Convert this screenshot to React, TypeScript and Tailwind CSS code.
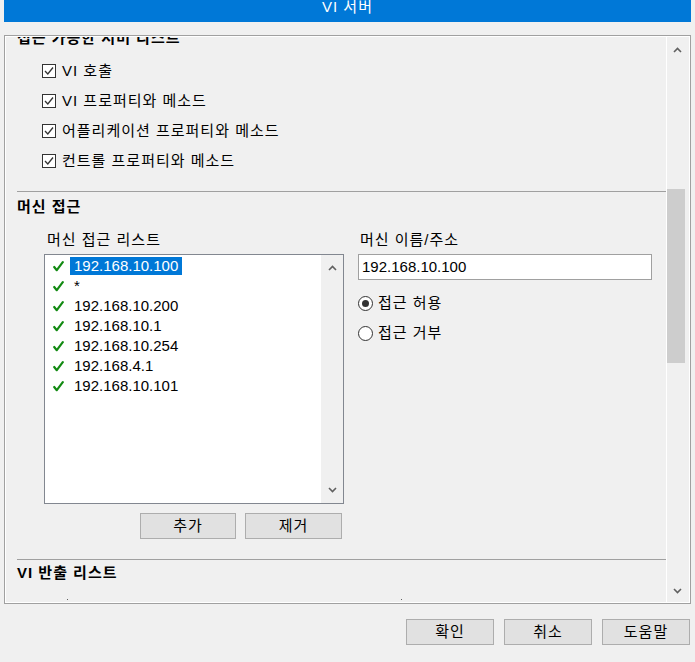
import React from 'react';

const font = "font-['Liberation_Sans','Noto_Sans_CJK_KR',sans-serif]";

function Check() {
  return (
    <svg width="11" height="11" viewBox="0 0 11 11" className="shrink-0">
      <path d="M1.2 6 L3.8 9.2 L9.8 1.2" fill="none" stroke="#128a12" strokeWidth="2.2" strokeLinecap="round" strokeLinejoin="round" />
    </svg>
  );
}

function CheckBox() {
  return (
    <div className="w-[14px] h-[14px] border border-[#333333] bg-white flex items-center justify-center shrink-0">
      <svg width="10" height="10" viewBox="0 0 10 10">
        <path d="M1 5 L3.8 8 L9 1.5" fill="none" stroke="#333333" strokeWidth="1.3" />
      </svg>
    </div>
  );
}

function Radio({ on }: { on?: boolean }) {
  return (
    <div className="w-[15px] h-[15px] rounded-full border border-[#333333] bg-white flex items-center justify-center shrink-0">
      {on && <div className="w-[7px] h-[7px] rounded-full bg-[#333333]" />}
    </div>
  );
}

function Chevron({ down }: { down?: boolean }) {
  return (
    <svg width="9" height="6" viewBox="0 0 9 6">
      <path d={down ? 'M1 1 L4.5 4.5 L8 1' : 'M1 5 L4.5 1.5 L8 5'} fill="none" stroke="#606060" strokeWidth="1.6" />
    </svg>
  );
}

function Btn({ label, w }: { label: string; w: string }) {
  return (
    <div className={`${w} h-[26px] border border-[#adadad] bg-[#e1e1e1] flex items-center justify-center leading-[20px]`}>
      {label}
    </div>
  );
}

export default function App() {
  const items = ['192.168.10.100', '*', '192.168.10.200', '192.168.10.1', '192.168.10.254', '192.168.4.1', '192.168.10.101'];
  const options = ['VI 호출', 'VI 프로퍼티와 메소드', '어플리케이션 프로퍼티와 메소드', '컨트롤 프로퍼티와 메소드'];

  return (
    <div className={`w-[695px] h-[662px] bg-[#f0f0f0] overflow-hidden text-[15px] tracking-[1px] text-black ${font}`}>
      {/* title */}
      <div className="ml-[4px] w-[687px] h-[22px] bg-[#0078d7] overflow-hidden flex justify-center">
        <span className="text-white leading-[20px] -mt-[3px]">VI 서버</span>
      </div>

      {/* scrolling panel */}
      <div className="mt-[13px] ml-[4px] w-[687px] h-[569px] border border-[#a0a0a0] flex">
        <div className="flex-1 flex border border-white">
          <div className="w-[660px] overflow-hidden flex flex-col">
            <div className="h-[20px] leading-[20px] -mt-[9px] pl-[11px] font-bold">접근 가능한 서버 리스트</div>

            <div className="mt-[8px] pl-[36px] flex flex-col">
              {options.map((o) => (
                <div key={o} className="h-[30px] flex items-center gap-[6px] leading-[20px]">
                  <CheckBox />
                  <span>{o}</span>
                </div>
              ))}
            </div>

            <div className="mt-[15px] ml-[11px] h-px bg-[#a0a0a0]" />
            <div className="mt-[5px] h-[20px] leading-[20px] pl-[11px] font-bold">머신 접근</div>

            <div className="mt-[13px] flex pl-[38px]">
              <div className="w-[300px] flex flex-col">
                <div className="h-[20px] leading-[20px] pl-[3px]">머신 접근 리스트</div>
                <div className="mt-[4px] h-[250px] border border-[#828790] bg-white flex">
                  <div className="flex-1 pt-[1px] flex flex-col tracking-normal">
                    {items.map((it, i) => (
                      <div key={i} className="h-[20px] flex items-center pl-[8px]">
                        <Check />
                        <span
                          className={`ml-[6px] px-[4px] h-[18px] leading-[18px] ${i === 0 ? 'bg-[#0078d7] text-white' : ''}`}
                        >
                          {it}
                        </span>
                      </div>
                    ))}
                  </div>
                  <div className="w-[22px] bg-[#f0f0f0] flex flex-col items-center justify-between py-[10px]">
                    <Chevron />
                    <Chevron down />
                  </div>
                </div>
                <div className="mt-[9px] flex gap-[9px] pl-[96px]">
                  <Btn label="추가" w="w-[96px]" />
                  <Btn label="제거" w="w-[97px]" />
                </div>
              </div>

              <div className="ml-[14px] flex flex-col">
                <div className="h-[20px] leading-[20px] pl-[2px]">머신 이름/주소</div>
                <div className="mt-[4px] w-[294px] h-[26px] border border-[#a0a0a0] bg-white flex items-center pl-[3px] leading-[20px] tracking-normal">
                  192.168.10.100
                </div>
                <div className="mt-[8px] flex flex-col">
                  <div className="h-[30px] flex items-center gap-[5px] leading-[20px]">
                    <Radio on />
                    <span>접근 허용</span>
                  </div>
                  <div className="h-[30px] flex items-center gap-[5px] leading-[20px]">
                    <Radio />
                    <span>접근 거부</span>
                  </div>
                </div>
              </div>
            </div>

            <div className="mt-[20px] ml-[11px] h-px bg-[#a0a0a0]" />
            <div className="mt-[3px] h-[20px] leading-[20px] pl-[11px] font-bold">VI 반출 리스트</div>
            <div className="mt-[16px] h-px flex">
              <div className="ml-[61px] w-px h-px bg-[#606060]" />
              <div className="ml-[333px] w-px h-px bg-[#606060]" />
            </div>
          </div>

          {/* outer scrollbar */}
          <div className="w-[22px] border-l border-white flex flex-col">
            <div className="h-[26px] flex items-center justify-center pr-[1px]">
              <Chevron />
            </div>
            <div className="mt-[126px] w-[18px] h-[174px] bg-[#cdcdcd]" />
            <div className="flex-1" />
            <div className="h-[22px] flex items-center justify-center pr-[1px]">
              <Chevron down />
            </div>
          </div>
        </div>
      </div>

      {/* dialog buttons */}
      <div className="mt-[15px] flex justify-end gap-[10px] pr-[5px]">
        <Btn label="확인" w="w-[88px]" />
        <Btn label="취소" w="w-[88px]" />
        <Btn label="도움말" w="w-[88px]" />
      </div>
    </div>
  );
}
